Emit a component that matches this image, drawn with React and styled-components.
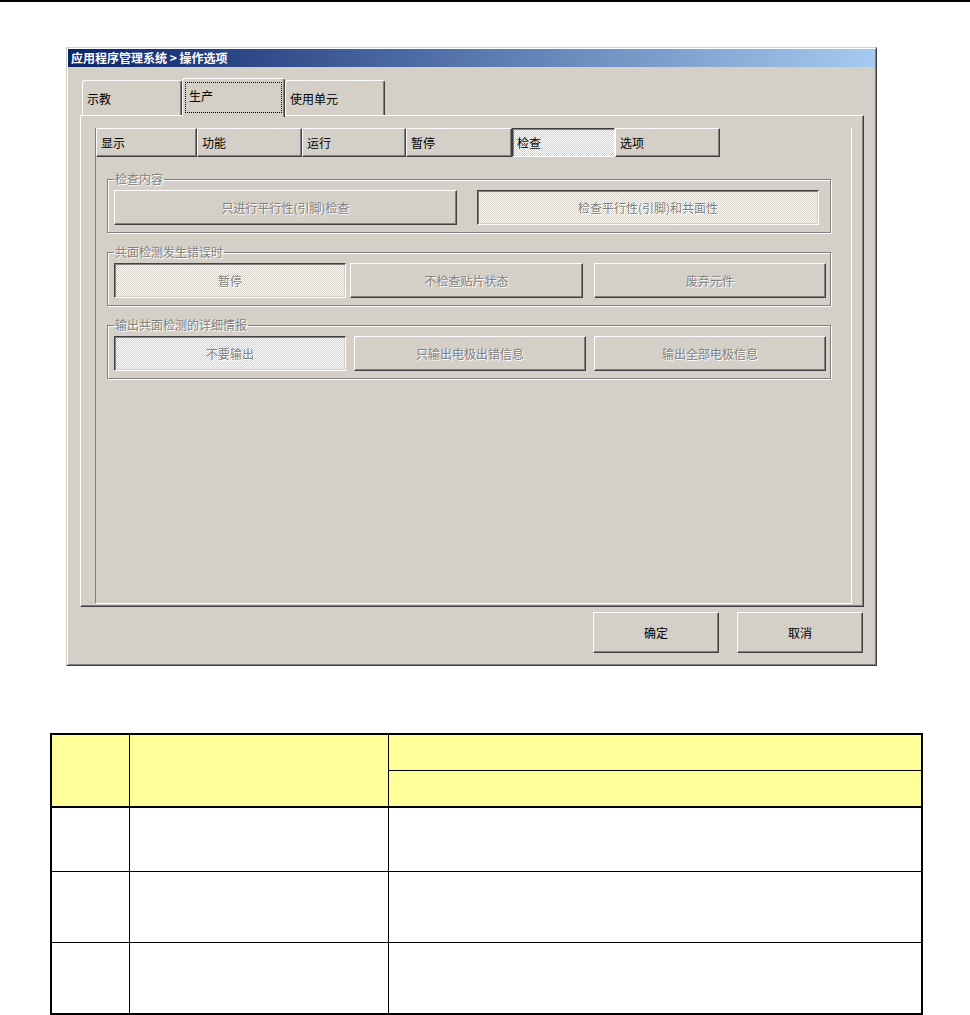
import React from "react";
import styled, { createGlobalStyle, css } from "styled-components";

const GlobalStyle = createGlobalStyle`
  body {
    margin: 0;
    background: #fff;
    font-family: "Noto Sans CJK SC", "Liberation Sans", sans-serif;
  }
`;

const outerTabs = [
  { label: "示教", width: 100 },
  { label: "生产", width: 103, active: true },
  { label: "使用单元", width: 100 },
];

const innerTabs = [
  { label: "显示", width: 101 },
  { label: "功能", width: 105 },
  { label: "运行", width: 104 },
  { label: "暂停", width: 106 },
  { label: "检查", width: 103, active: true },
  { label: "选项", width: 105 },
];

const groups = [
  {
    title: "检查内容",
    options: [
      { label: "只进行平行性(引脚)检查", width: 343, ml: 0 },
      { label: "检查平行性(引脚)和共面性", width: 342, ml: 20, active: true },
    ],
  },
  {
    title: "共面检测发生错误时",
    options: [
      { label: "暂停", width: 232, ml: 0, active: true },
      { label: "不检查贴片状态", width: 233, ml: 4 },
      { label: "废弃元件", width: 232, ml: 11 },
    ],
  },
  {
    title: "输出共面检测的详细情报",
    options: [
      { label: "不要输出", width: 232, ml: 0, active: true },
      { label: "只输出电极出错信息", width: 232, ml: 8 },
      { label: "输出全部电极信息", width: 232, ml: 8 },
    ],
  },
];

const rowHeights = [63, 70, 70];

const dither = css`
  background-color: #fff;
  background-image: repeating-conic-gradient(#d4d0c8 0 25%, #fff 0 50%);
  background-size: 2px 2px;
`;

function App() {
  return (
    <>
      <GlobalStyle />
      <TopRule />
      <Dialog>
        <TitleBar>应用程序管理系统 &gt; 操作选项</TitleBar>
        <DialogBody>
          <TabStrip>
            {outerTabs.map((t) => (
              <OuterTab key={t.label} $width={t.width} $active={t.active}>
                {t.active ? <FocusBox>{t.label}</FocusBox> : t.label}
              </OuterTab>
            ))}
          </TabStrip>
          <OuterPanel>
            <InnerPanel>
              <InnerTabStrip>
                {innerTabs.map((t) => (
                  <InnerTab key={t.label} $width={t.width} $active={t.active}>
                    {t.label}
                  </InnerTab>
                ))}
              </InnerTabStrip>
              <Groups>
                {groups.map((g) => (
                  <Group key={g.title}>
                    <Legend>{g.title}</Legend>
                    <OptionRow>
                      {g.options.map((o) => (
                        <OptionButton
                          key={o.label}
                          $width={o.width}
                          $ml={o.ml}
                          $active={o.active}
                        >
                          {o.label}
                        </OptionButton>
                      ))}
                    </OptionRow>
                  </Group>
                ))}
              </Groups>
            </InnerPanel>
          </OuterPanel>
          <Footer>
            <DlgButton>确定</DlgButton>
            <DlgButton>取消</DlgButton>
          </Footer>
        </DialogBody>
      </Dialog>

      <Table>
        <colgroup>
          <col style={{ width: 78 }} />
          <col style={{ width: 259 }} />
          <col style={{ width: 534 }} />
        </colgroup>
        <thead>
          <tr>
            <HeadCell rowSpan={2} />
            <HeadCell rowSpan={2} />
            <HeadCell $h={35} />
          </tr>
          <tr>
            <HeadCell $h={35} />
          </tr>
        </thead>
        <tbody>
          {rowHeights.map((h, i) => (
            <tr key={i}>
              <Cell $h={h} />
              <Cell $h={h} />
              <Cell $h={h} />
            </tr>
          ))}
        </tbody>
      </Table>
    </>
  );
}

const TopRule = styled.div`
  height: 2px;
  background: #000;
`;

const Dialog = styled.div`
  margin: 45px 0 0 66px;
  width: 811px;
  height: 619px;
  box-sizing: border-box;
  background: #d4d0c8;
  border: 1px solid;
  border-color: #d4d0c8 #404040 #404040 #d4d0c8;
  box-shadow: inset 1px 1px #fff, inset -1px -1px #808080;
  padding: 1px;
  display: flex;
  flex-direction: column;
`;

const TitleBar = styled.div`
  height: 18px;
  line-height: 18px;
  padding-left: 3px;
  background: linear-gradient(to right, #0a246a, #a6caf0);
  color: #fff;
  font-size: 12px;
  font-weight: bold;
`;

const DialogBody = styled.div`
  flex: 1;
  display: flex;
  flex-direction: column;
  padding: 11px 11px 0 12px;
`;

const TabStrip = styled.div`
  display: flex;
  align-items: flex-end;
  height: 37px;
  padding-left: 2px;
`;

const OuterTab = styled.div`
  position: relative;
  box-sizing: border-box;
  width: ${(p) => p.$width}px;
  height: ${(p) => (p.$active ? 39 : 35)}px;
  margin-bottom: ${(p) => (p.$active ? -2 : 0)}px;
  z-index: ${(p) => (p.$active ? 1 : 0)};
  background: #d4d0c8;
  border-top: 1px solid #fff;
  border-left: 1px solid #fff;
  border-right: 1px solid #404040;
  box-shadow: inset -1px 0 #808080;
  border-radius: 3px 3px 0 0;
  font-size: 12px;
  color: #000;
  display: flex;
  align-items: center;
  padding-left: ${(p) => (p.$active ? 0 : 4)}px;
`;

const FocusBox = styled.div`
  flex: 1;
  align-self: stretch;
  margin: 3px 2px 4px 2px;
  border: 1px dotted #000;
  padding: 0 0 4px 3px;
  display: flex;
  align-items: center;
`;

const OuterPanel = styled.div`
  height: 492px;
  box-sizing: border-box;
  border: 1px solid;
  border-color: #fff #404040 #404040 #fff;
  box-shadow: inset -1px -1px #808080;
  padding: 12px 11px 2px 14px;
  display: flex;
`;

const InnerPanel = styled.div`
  flex: 1;
  border-left: 1px solid #808080;
  border-right: 1px solid #fff;
  border-bottom: 1px solid #fff;
  display: flex;
  flex-direction: column;
`;

const InnerTabStrip = styled.div`
  display: flex;
  height: 29px;
`;

const InnerTab = styled.div`
  box-sizing: border-box;
  width: ${(p) => p.$width}px;
  border: 1px solid;
  font-size: 12px;
  color: #000;
  display: flex;
  align-items: center;
  padding-left: 4px;
  ${(p) =>
    p.$active
      ? css`
          ${dither};
          border-color: #404040 #fff #fff #404040;
          box-shadow: inset 1px 1px #808080;
        `
      : css`
          background: #d4d0c8;
          border-color: #fff #404040 #404040 #fff;
          box-shadow: inset -1px -1px #808080;
        `}
`;

const Groups = styled.div`
  display: flex;
  flex-direction: column;
  gap: 12px;
  padding: 15px 0 0 11px;
`;

const Group = styled.fieldset`
  margin: 0;
  width: 724px;
  min-width: 0;
  box-sizing: border-box;
  border: 1px solid #808080;
  box-shadow: inset 1px 1px #fff, 1px 1px #fff;
  padding: 4px 3px 7px 6px;
`;

const Legend = styled.legend`
  font-size: 12px;
  line-height: 14px;
  padding: 0 1px;
  color: #808080;
  text-shadow: 1px 1px #fff;
`;

const OptionRow = styled.div`
  display: flex;
`;

const OptionButton = styled.div`
  flex: none;
  box-sizing: border-box;
  width: ${(p) => p.$width}px;
  height: 35px;
  margin-left: ${(p) => p.$ml}px;
  border: 1px solid;
  font-size: 12px;
  color: #808080;
  text-shadow: 1px 1px #fff;
  display: flex;
  align-items: center;
  justify-content: center;
  ${(p) =>
    p.$active
      ? css`
          ${dither};
          border-color: #404040 #fff #fff #404040;
          box-shadow: inset 1px 1px #808080, inset -1px -1px #d4d0c8;
        `
      : css`
          background: #d4d0c8;
          border-color: #fff #404040 #404040 #fff;
          box-shadow: inset -1px -1px #808080;
        `}
`;

const Footer = styled.div`
  display: flex;
  justify-content: flex-end;
  gap: 18px;
  padding: 5px 1px 0 0;
`;

const DlgButton = styled.div`
  box-sizing: border-box;
  width: 126px;
  height: 41px;
  background: #d4d0c8;
  border: 1px solid;
  border-color: #fff #404040 #404040 #fff;
  box-shadow: inset -1px -1px #808080;
  font-size: 12px;
  color: #000;
  display: flex;
  align-items: center;
  justify-content: center;
`;

const Table = styled.table`
  margin: 67px 0 0 50px;
  width: 871px;
  table-layout: fixed;
  border-collapse: collapse;
  border: 2px solid #000;
`;

const HeadCell = styled.th`
  background: #ffff99;
  border: 1px solid #000;
  border-bottom-width: 2px;
  padding: 0;
  height: ${(p) => (p.$h ? `${p.$h}px` : "auto")};
  tr:first-child > &:last-child {
    border-bottom-width: 1px;
  }
`;

const Cell = styled.td`
  border: 1px solid #000;
  padding: 0;
  height: ${(p) => p.$h}px;
`;

export default App;
